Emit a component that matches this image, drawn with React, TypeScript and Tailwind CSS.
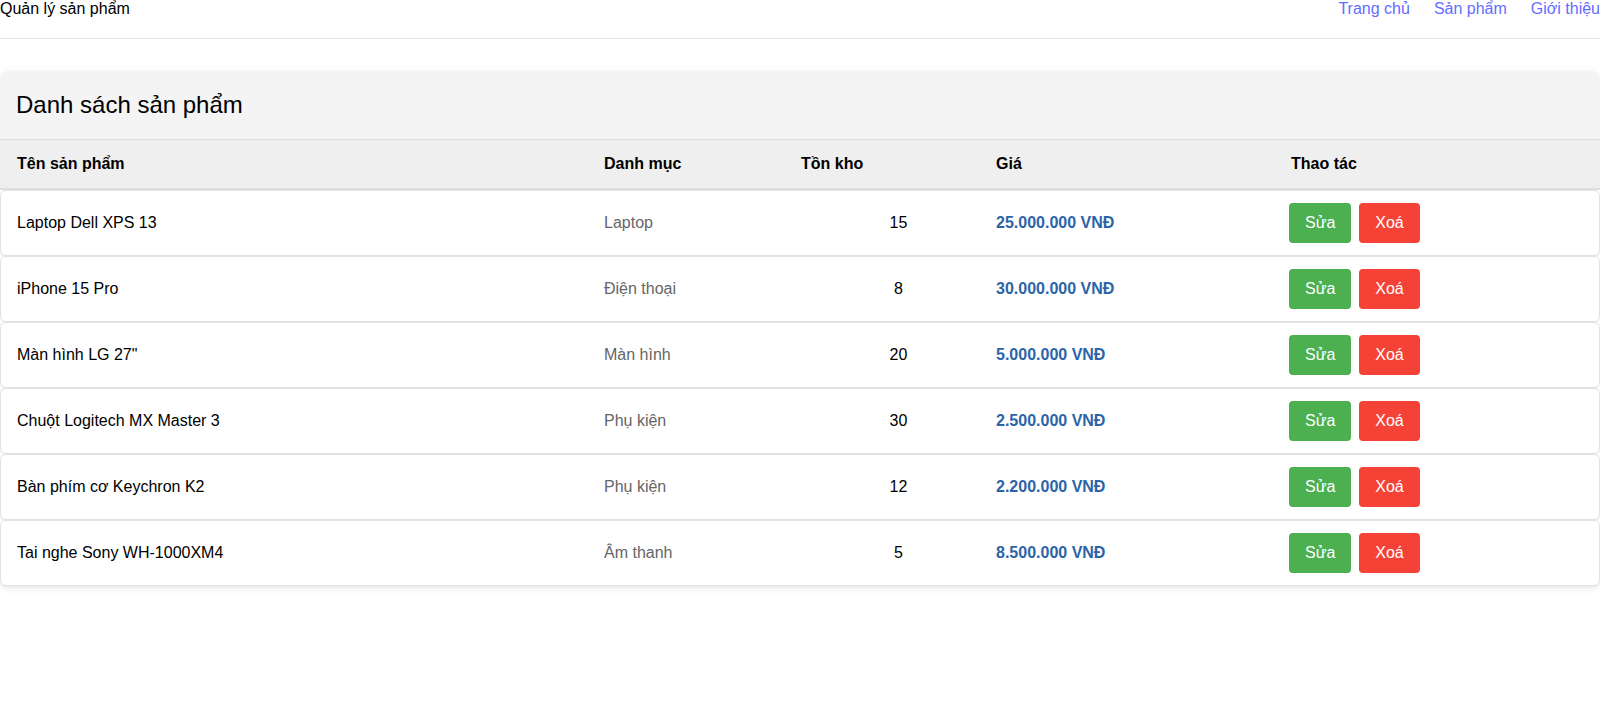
const products = [
  { name: "Laptop Dell XPS 13", category: "Laptop", stock: 15, price: "25.000.000 VNĐ" },
  { name: "iPhone 15 Pro", category: "Điện thoại", stock: 8, price: "30.000.000 VNĐ" },
  { name: 'Màn hình LG 27"', category: "Màn hình", stock: 20, price: "5.000.000 VNĐ" },
  { name: "Chuột Logitech MX Master 3", category: "Phụ kiện", stock: 30, price: "2.500.000 VNĐ" },
  { name: "Bàn phím cơ Keychron K2", category: "Phụ kiện", stock: 12, price: "2.200.000 VNĐ" },
  { name: "Tai nghe Sony WH-1000XM4", category: "Âm thanh", stock: 5, price: "8.500.000 VNĐ" },
];

const cols = "grid grid-cols-[587px_197px_195px_295px_1fr] items-center";

const App = () => {
  return (
    <div className="min-h-screen bg-white text-[16px] text-black font-['Liberation_Sans',Arial,sans-serif]">
      <nav className="h-[39px] flex justify-between border-b border-[#e8e8e8]">
        <span className="leading-[18px]">Quản lý sản phẩm</span>
        <div className="flex gap-6 leading-[18px] text-[#646cff]">
          <a href="#">Trang chủ</a>
          <a href="#">Sản phẩm</a>
          <a href="#">Giới thiệu</a>
        </div>
      </nav>

      <div className="mt-8 rounded-lg shadow-[0_2px_10px_rgba(0,0,0,0.08)]">
        <div className="h-[69px] flex items-center px-4 bg-[#f4f4f4] border-b border-[#dddddd] rounded-t-lg">
          <h2 className="text-[24px] leading-none">Danh sách sản phẩm</h2>
        </div>

        <div className={`${cols} h-[50px] bg-[#efefef] border-b-2 border-[#dedede] font-bold`}>
          <div className="pl-[17px]">Tên sản phẩm</div>
          <div className="pl-[17px]">Danh mục</div>
          <div className="pl-[17px]">Tồn kho</div>
          <div className="pl-[17px]">Giá</div>
          <div className="pl-[17px]">Thao tác</div>
        </div>

        <div>
          {products.map((p) => (
            <div
              key={p.name}
              className={`${cols} h-[66px] bg-white border border-[#e2e2e2] rounded-md shadow-[0_1px_3px_rgba(0,0,0,0.06)]`}
            >
              <div className="pl-4">{p.name}</div>
              <div className="pl-4 text-[#666666]">{p.category}</div>
              <div className="pl-[32px] text-center">{p.stock}</div>
              <div className="pl-4 font-bold text-[#2c64a8]">{p.price}</div>
              <div className="pl-[14px] flex gap-2">
                <button className="h-10 px-4 rounded bg-[#4caf50] text-white">Sửa</button>
                <button className="h-10 px-4 rounded bg-[#f44336] text-white">Xoá</button>
              </div>
            </div>
          ))}
        </div>
      </div>
    </div>
  );
};

export default App;
